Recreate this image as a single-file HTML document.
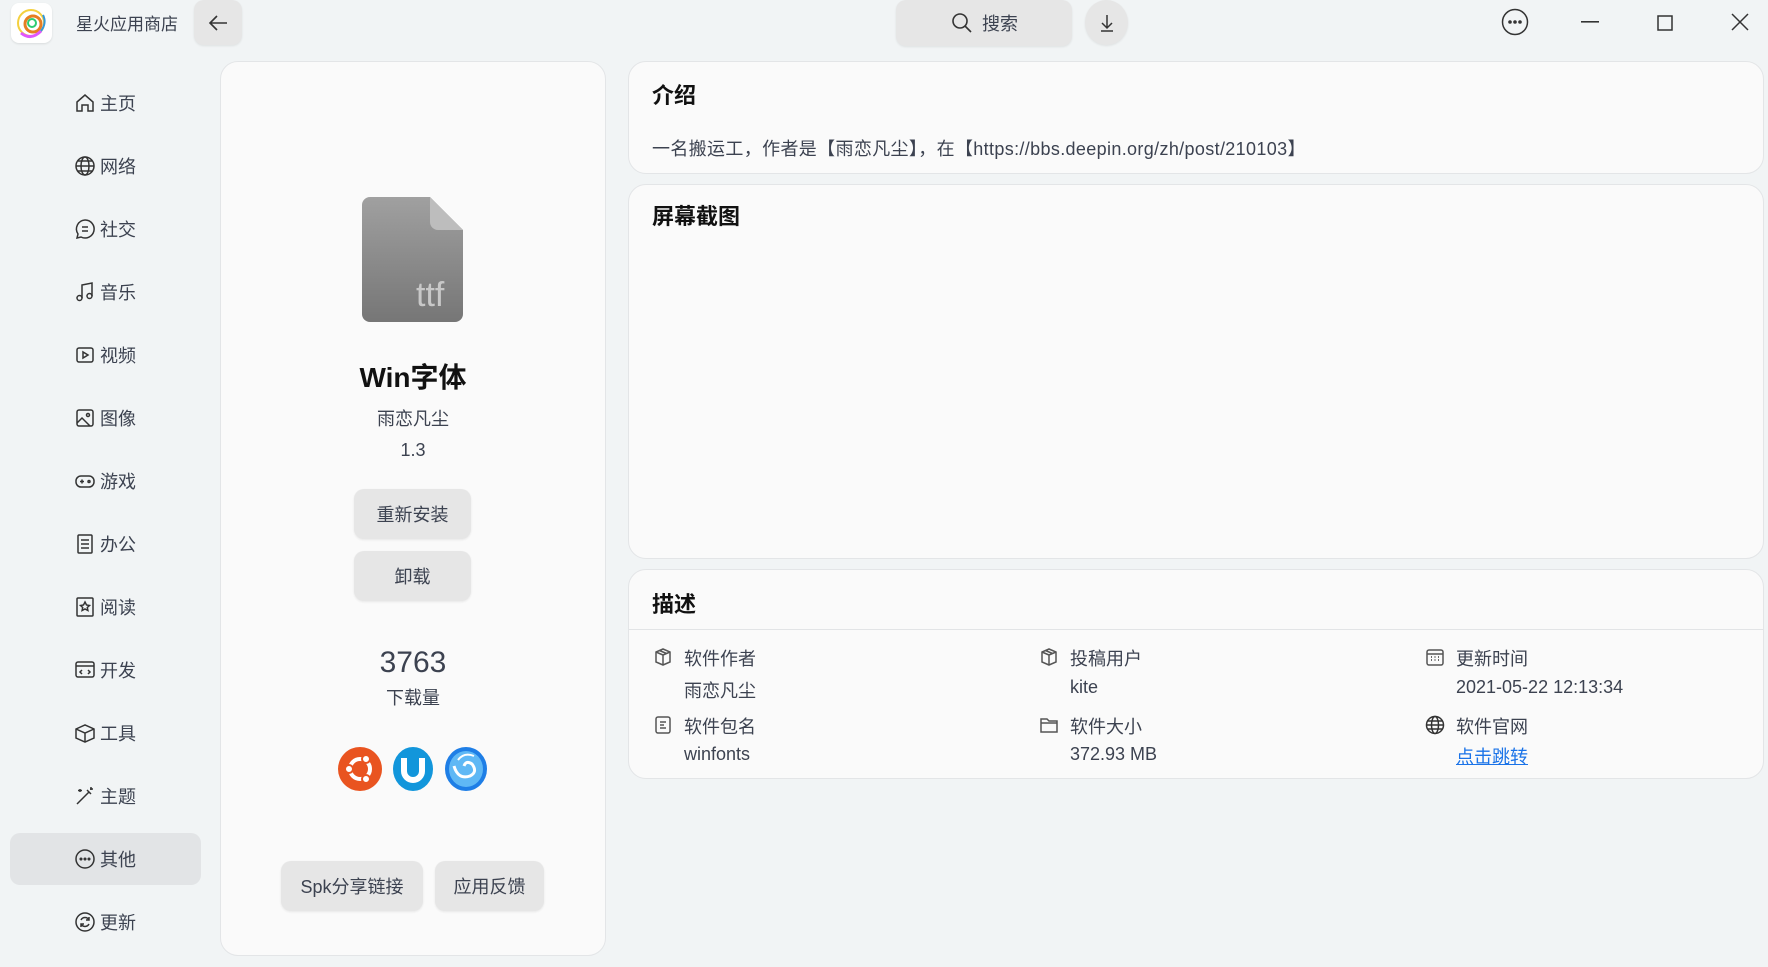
<!DOCTYPE html>
<html><head><meta charset="utf-8"><style>
*{margin:0;padding:0;box-sizing:border-box}
body{width:1768px;height:967px;background:#f1f4f5;font-family:"Liberation Sans","Noto Sans CJK SC",sans-serif;color:#3c4250;position:relative;overflow:hidden}
.a{position:absolute}
.card{position:absolute;background:#fafafa;border:1px solid #e3e5e7;border-radius:18px}
.btn{position:absolute;background:#e6e6e6;border-radius:10px;display:flex;align-items:center;justify-content:center;font-size:18px;color:#3c4250;box-shadow:0 1px 2px rgba(0,0,0,.08)}
.nav{position:absolute;left:74px;height:30px;display:flex;align-items:center;font-size:18px;color:#3c4250}
.nav svg{width:22px;height:22px;margin-right:4px;fill:none;stroke:#333;stroke-width:1.5}
.t{position:absolute;font-size:18px;white-space:nowrap}
.ic{position:absolute;width:20px;height:20px;fill:none;stroke:#555;stroke-width:1.5}
h2{position:absolute;font-size:22px;font-weight:bold;color:#111}
</style></head><body>
<div class="a" style="left:11px;top:3px;width:41px;height:40px;background:#fff;border-radius:8px;box-shadow:0 1px 2px rgba(0,0,0,.1)">
<svg width="41" height="40" viewBox="0 0 41 40"><circle cx="20" cy="20" r="13" fill="none" stroke="#f4d03f" stroke-width="2"/><circle cx="22" cy="21" r="8" fill="none" stroke="#e67e22" stroke-width="3"/><circle cx="21" cy="20" r="4" fill="none" stroke="#2ecc71" stroke-width="2"/><path d="M10 30 Q20 38 30 28" stroke="#e056fd" stroke-width="3" fill="none"/><path d="M32 12 Q36 20 30 28" stroke="#3498db" stroke-width="2" fill="none"/></svg></div>
<div class="t" style="left:76px;top:10px;font-size:17px">星火应用商店</div>
<div class="btn" style="left:194px;top:0;width:48px;height:45px"><svg width="22" height="22" viewBox="0 0 22 22" fill="none" stroke="#333" stroke-width="1.6"><path d="M20 11H3M10 4L3 11l7 7"/></svg></div>
<div class="btn" style="left:896px;top:0;width:176px;height:46px;font-size:18px"><svg width="24" height="24" viewBox="0 0 24 24" fill="none" stroke="#333" stroke-width="1.6" style="margin-right:8px"><circle cx="10" cy="10" r="7"/><path d="M15 15l6 6"/></svg>搜索</div>
<div class="btn" style="left:1085px;top:0;width:43px;height:45px;border-radius:50%"><svg width="18" height="20" viewBox="0 0 18 20" fill="none" stroke="#333" stroke-width="1.5"><path d="M9 2v13M4 10l5 5 5-5M3 18h12"/></svg></div>
<svg class="a" style="left:1501px;top:8px" width="28" height="28" viewBox="0 0 28 28"><circle cx="14" cy="14" r="12.5" fill="none" stroke="#333" stroke-width="1.5"/><circle cx="9" cy="14" r="1.8" fill="#333"/><circle cx="14" cy="14" r="1.8" fill="#333"/><circle cx="19" cy="14" r="1.8" fill="#333"/></svg>
<svg class="a" style="left:1581px;top:21px" width="18" height="2"><rect width="18" height="1.6" fill="#333"/></svg>
<svg class="a" style="left:1657px;top:15px" width="16" height="16"><rect x="1" y="1" width="14" height="14" fill="none" stroke="#333" stroke-width="1.5"/></svg>
<svg class="a" style="left:1731px;top:13px" width="18" height="18"><path d="M1 1l16 16M17 1L1 17" stroke="#333" stroke-width="1.5"/></svg>
<div class="a" style="left:10px;top:833px;width:191px;height:52px;background:#e2e4e6;border-radius:10px"></div>
<div class="nav" style="top:88px"><svg viewBox="0 0 22 22"><path d="M3 10L11 3l8 7v9h-5v-6H8v6H3z"/></svg>主页</div>
<div class="nav" style="top:151px"><svg viewBox="0 0 22 22"><circle cx="11" cy="11" r="9"/><ellipse cx="11" cy="11" rx="4" ry="9"/><path d="M2 11h18M4 6h14M4 16h14"/></svg>网络</div>
<div class="nav" style="top:214px"><svg viewBox="0 0 22 22"><path d="M11 2a9 9 0 1 1-4 17l-4 1 1-4A9 9 0 0 1 11 2z"/><path d="M8 9h6M8 13h6"/></svg>社交</div>
<div class="nav" style="top:277px"><svg viewBox="0 0 22 22"><path d="M8 17V4l10-2v13"/><circle cx="5.5" cy="17" r="2.5"/><circle cx="15.5" cy="15" r="2.5"/></svg>音乐</div>
<div class="nav" style="top:340px"><svg viewBox="0 0 22 22"><rect x="3" y="4" width="16" height="14" rx="2"/><path d="M9 8v6l5-3z"/></svg>视频</div>
<div class="nav" style="top:403px"><svg viewBox="0 0 22 22"><rect x="3" y="3" width="16" height="16" rx="2"/><circle cx="14" cy="8" r="1.5"/><path d="M3 16l5-5 8 8"/></svg>图像</div>
<div class="nav" style="top:466px"><svg viewBox="0 0 22 22"><rect x="2" y="6" width="18" height="11" rx="5"/><path d="M6 11.5h4M8 9.5v4"/><circle cx="15" cy="11.5" r="1"/></svg>游戏</div>
<div class="nav" style="top:529px"><svg viewBox="0 0 22 22"><rect x="4" y="2" width="14" height="18" rx="1"/><path d="M7 7h8M7 11h8M7 15h8"/></svg>办公</div>
<div class="nav" style="top:592px"><svg viewBox="0 0 22 22"><rect x="3" y="2" width="16" height="18" rx="1"/><path d="M11 6l1.5 3 3 .5-2.2 2 .6 3L11 13l-2.9 1.5.6-3-2.2-2 3-.5z"/></svg>阅读</div>
<div class="nav" style="top:655px"><svg viewBox="0 0 22 22"><rect x="2" y="3" width="18" height="15" rx="2"/><path d="M2 7h18M8 11l-2 2 2 2M14 11l2 2-2 2"/></svg>开发</div>
<div class="nav" style="top:718px"><svg viewBox="0 0 22 22"><path d="M2 7l9-4 9 4v9l-9 4-9-4z"/><path d="M2 7l9 4 9-4M11 11v9"/></svg>工具</div>
<div class="nav" style="top:781px"><svg viewBox="0 0 22 22"><path d="M3 19L15 7M13 5l4 4M17 2v3M19 4h-3M6 4v3M8 5.5H4"/></svg>主题</div>
<div class="nav" style="top:844px"><svg viewBox="0 0 22 22"><circle cx="11" cy="11" r="9"/><circle cx="7" cy="11" r=".8" fill="#333"/><circle cx="11" cy="11" r=".8" fill="#333"/><circle cx="15" cy="11" r=".8" fill="#333"/></svg>其他</div>
<div class="nav" style="top:907px"><svg viewBox="0 0 22 22"><circle cx="11" cy="11" r="9"/><path d="M7 9a4.5 4.5 0 0 1 8 0M15 13a4.5 4.5 0 0 1-8 0M15 6v3h-3M7 16v-3h3"/></svg>更新</div>
<div class="card" style="left:220px;top:61px;width:386px;height:895px"></div>
<svg class="a" style="left:362px;top:197px" width="101" height="125" viewBox="0 0 101 125"><defs><linearGradient id="g" x1="0" y1="0" x2="0" y2="1"><stop offset="0" stop-color="#a0a0a0"/><stop offset="1" stop-color="#767676"/></linearGradient></defs><path d="M8 0h60l33 33v84a8 8 0 0 1-8 8H8a8 8 0 0 1-8-8V8a8 8 0 0 1 8-8z" fill="url(#g)"/><path d="M68 0v25a8 8 0 0 0 8 8h25z" fill="#bdbdbd"/><text x="54" y="109" font-family="Liberation Sans,sans-serif" font-size="34" fill="#c8c8c8">ttf</text></svg>
<div class="t" style="left:220px;width:386px;text-align:center;top:356px;font-size:28px;font-weight:bold;color:#111">Win字体</div>
<div class="t" style="left:220px;width:386px;text-align:center;top:405px;font-size:18px">雨恋凡尘</div>
<div class="t" style="left:220px;width:386px;text-align:center;top:440px;font-size:18px">1.3</div>
<div class="btn" style="left:354px;top:489px;width:117px;height:50px">重新安装</div>
<div class="btn" style="left:354px;top:551px;width:117px;height:50px">卸载</div>
<div class="t" style="left:220px;width:386px;text-align:center;top:646px;font-size:30px">3763</div>
<div class="t" style="left:220px;width:386px;text-align:center;top:684px;font-size:18px">下载量</div>
<svg class="a" style="left:337px;top:746px" width="46" height="46" viewBox="0 0 46 46"><circle cx="23" cy="23" r="22" fill="#e95420"/><circle cx="23" cy="23" r="10" fill="none" stroke="#fff" stroke-width="4"/><circle cx="12" cy="23" r="4" fill="#fff" stroke="#e95420" stroke-width="2"/><circle cx="29" cy="13" r="4" fill="#fff" stroke="#e95420" stroke-width="2"/><circle cx="29" cy="33" r="4" fill="#fff" stroke="#e95420" stroke-width="2"/></svg>
<svg class="a" style="left:392px;top:746px" width="42" height="46" viewBox="0 0 42 46"><ellipse cx="21" cy="23" rx="20" ry="22" fill="#1296db"/><path d="M12 12v13a9 9 0 0 0 18 0V12" fill="none" stroke="#fff" stroke-width="6"/></svg>
<svg class="a" style="left:444px;top:746px" width="44" height="46" viewBox="0 0 44 46"><ellipse cx="22" cy="23" rx="21" ry="22" fill="#1e7ee6"/><ellipse cx="22" cy="23" rx="17" ry="18" fill="#5fb8f5"/><path d="M10 20q4 14 16 10q8-4 2-12q-6-4-8 2" fill="none" stroke="#fff" stroke-width="3"/><path d="M30 10q-10-4-16 4" fill="none" stroke="#fff" stroke-width="2"/></svg>
<div class="btn" style="left:281px;top:861px;width:142px;height:50px">Spk分享链接</div>
<div class="btn" style="left:435px;top:861px;width:109px;height:50px">应用反馈</div>
<div class="card" style="left:628px;top:61px;width:1136px;height:113px"></div>
<h2 style="left:652px;top:78px">介绍</h2>
<div class="t" style="left:652px;top:135px;font-size:18px;letter-spacing:0.35px">一名搬运工，作者是【雨恋凡尘】，在【https://bbs.deepin.org/zh/post/210103】</div>
<div class="card" style="left:628px;top:184px;width:1136px;height:375px"></div>
<h2 style="left:652px;top:199px">屏幕截图</h2>
<div class="card" style="left:628px;top:569px;width:1136px;height:210px"></div>
<h2 style="left:652px;top:587px">描述</h2>
<div class="a" style="left:629px;top:629px;width:1134px;height:1px;background:#e2e4e6"></div>
<svg class="ic" style="left:653px;top:647px" viewBox="0 0 20 20"><path d="M10 2l7 3v10l-7 3-7-3V5z"/><path d="M3 5l7 3 7-3M10 8v10M6.5 3.5l7 3"/></svg>
<div class="t" style="left:684px;top:645px">软件作者</div><div class="t" style="left:684px;top:677px">雨恋凡尘</div>
<svg class="ic" style="left:653px;top:715px" viewBox="0 0 20 20"><rect x="3" y="2" width="14" height="16" rx="2"/><path d="M7 7h6M7 10h4M7 13h6"/></svg>
<div class="t" style="left:684px;top:713px">软件包名</div><div class="t" style="left:684px;top:744px">winfonts</div>
<svg class="ic" style="left:1039px;top:647px" viewBox="0 0 20 20"><path d="M10 2l7 3v10l-7 3-7-3V5z"/><path d="M3 5l7 3 7-3M10 8v10M6.5 3.5l7 3"/></svg>
<div class="t" style="left:1070px;top:645px">投稿用户</div><div class="t" style="left:1070px;top:677px">kite</div>
<svg class="ic" style="left:1039px;top:715px" viewBox="0 0 20 20"><path d="M2 4h6l2 2h8v11H2z"/><path d="M2 8h16"/></svg>
<div class="t" style="left:1070px;top:713px">软件大小</div><div class="t" style="left:1070px;top:744px">372.93 MB</div>
<svg class="ic" style="left:1425px;top:647px" viewBox="0 0 20 20"><rect x="2" y="3" width="16" height="15" rx="2"/><path d="M2 7h16"/><path d="M6 10h1M9.5 10h1M13 10h1M6 13h1M9.5 13h1M13 13h1" stroke-width="1.8"/></svg>
<div class="t" style="left:1456px;top:645px">更新时间</div><div class="t" style="left:1456px;top:677px">2021-05-22 12:13:34</div>
<svg class="ic" style="left:1425px;top:715px;stroke:#333" viewBox="0 0 20 20"><circle cx="10" cy="10" r="8.5"/><ellipse cx="10" cy="10" rx="3.5" ry="8.5"/><path d="M1.5 10h17M3 6h14M3 14h14"/></svg>
<div class="t" style="left:1456px;top:713px">软件官网</div><div class="t" style="left:1456px;top:743px;color:#1a73e8;text-decoration:underline">点击跳转</div>
</body></html>
